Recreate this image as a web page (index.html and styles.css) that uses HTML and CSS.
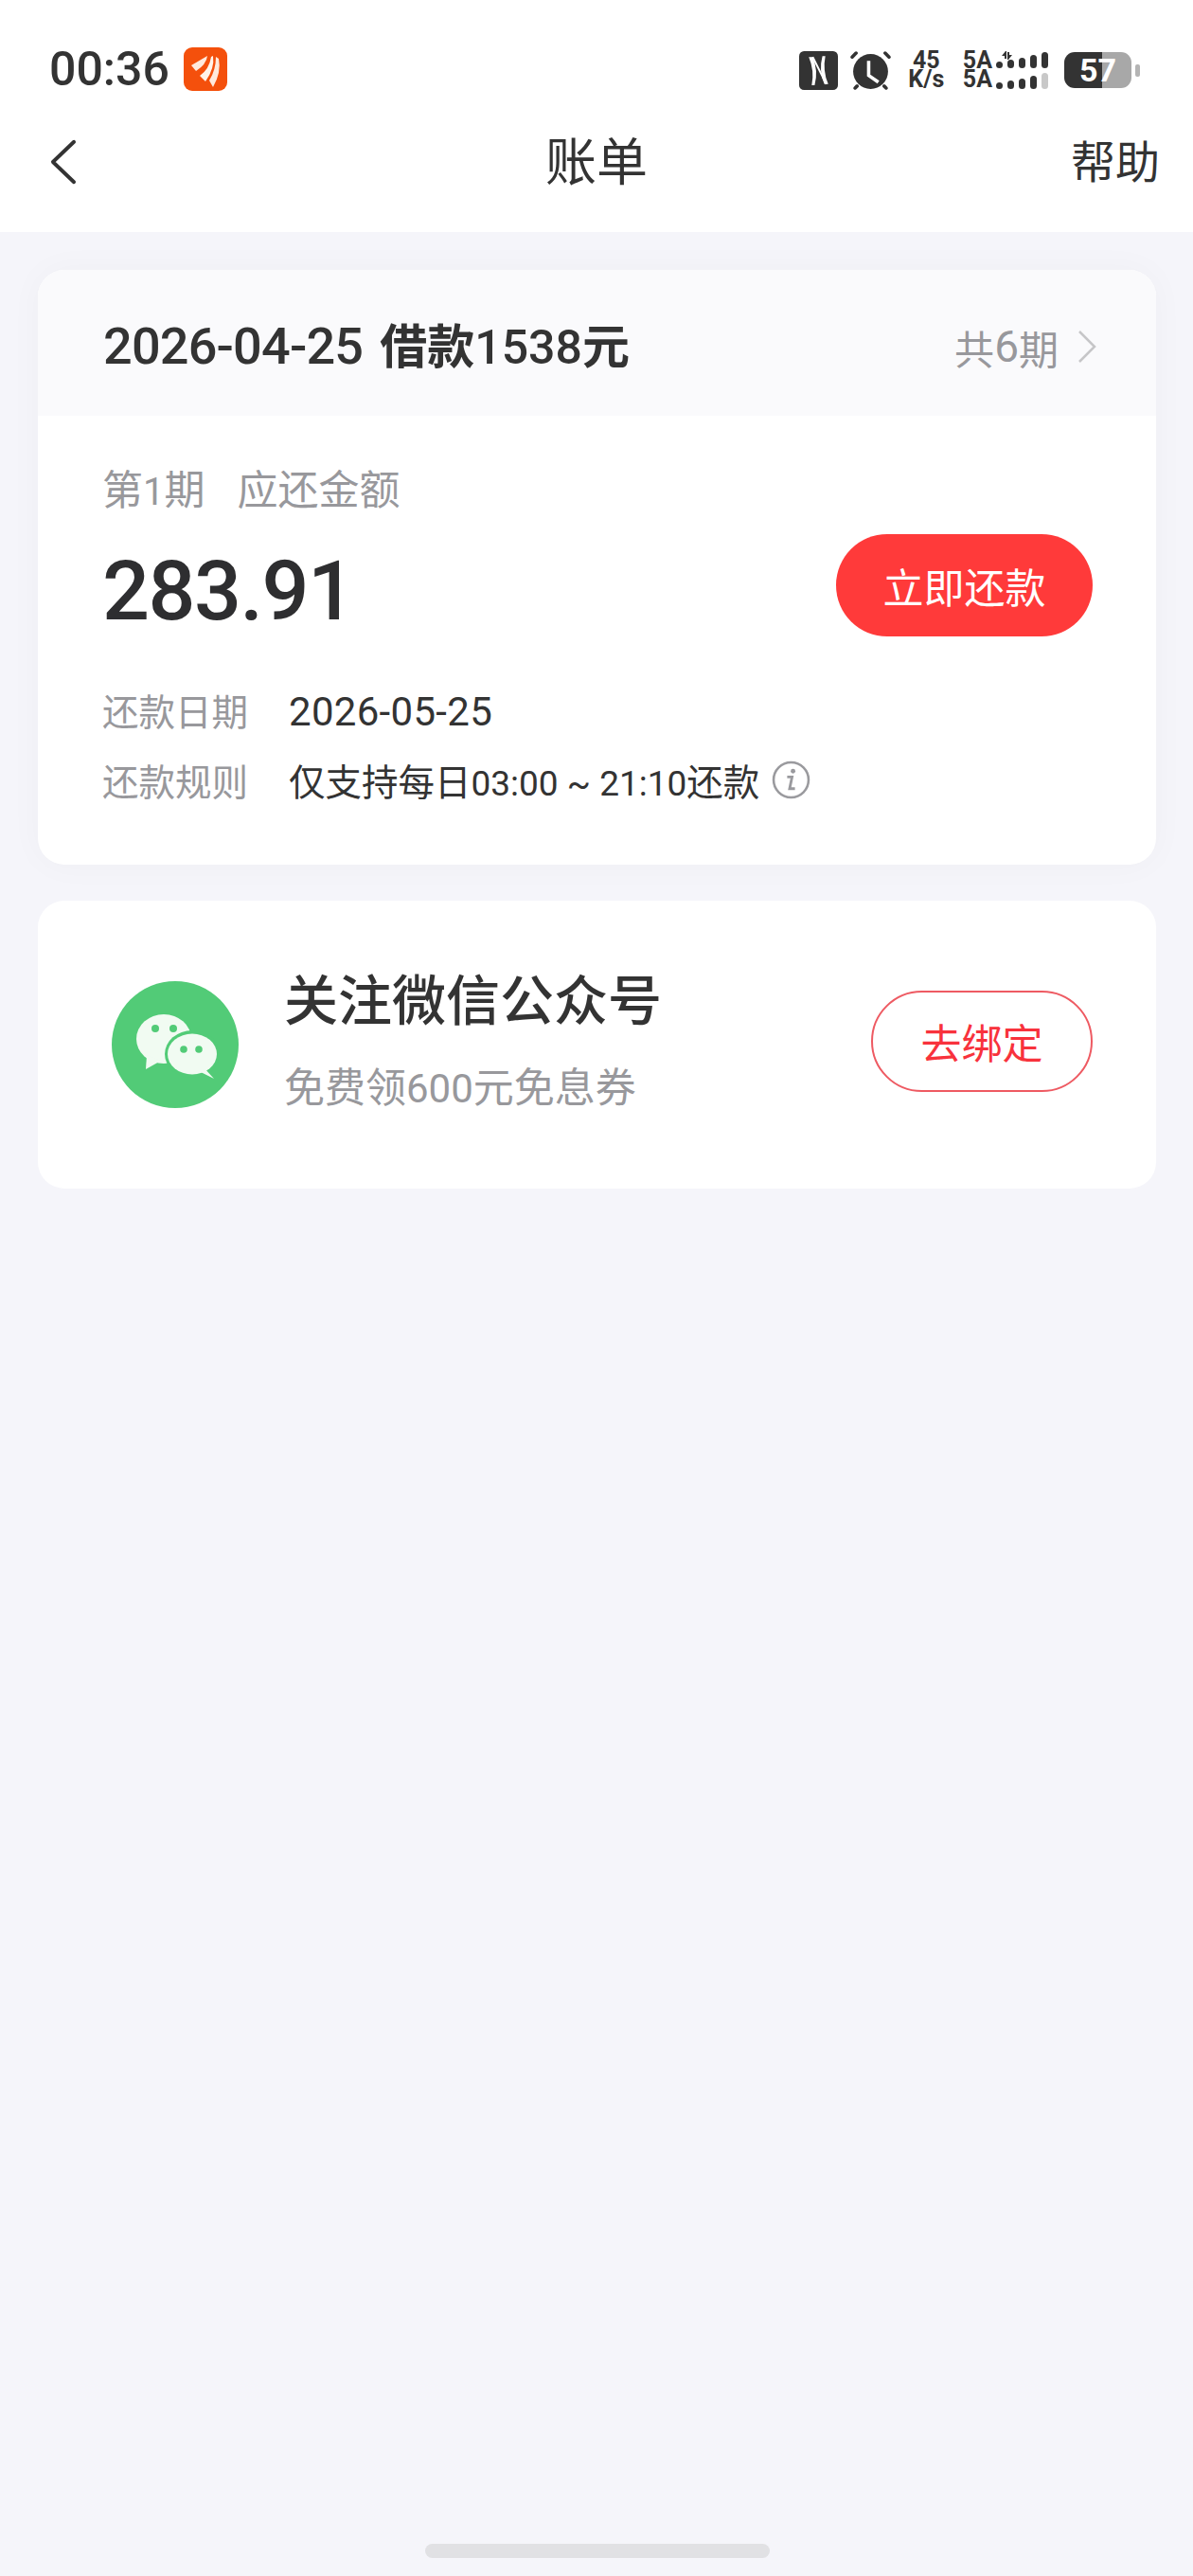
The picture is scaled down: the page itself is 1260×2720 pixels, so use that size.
FILE: index.html
```html
<!DOCTYPE html>
<html>
    <head>
        <meta charset="utf-8">
        <link rel="stylesheet" href="styles.css">
        <title>账单</title>
    </head>
    <body>
        <div class="topArea">
            <div class="statusBar">
                <span class="time">00:36</span>
                <svg class="appIcon" viewBox="0 0 46 46">
                    <rect width="46" height="46" rx="9" fill="#f4500c"/>
                    <path d="M8 19 L25 9 Q24 18 13 25 Z" fill="#ffe9dc"/>
                    <path d="M17 30 Q27 23 29 10 L31 9 Q33 22 23 36 Z" fill="#fff3ea"/>
                    <path d="M27 35 Q34 24 34 10 L37 12 Q40 26 31 42 Z" fill="#ffe9dc"/>
                </svg>
                <span class="statusRight">
                    <svg class="nfcIcon" viewBox="0 0 40 40">
                        <rect width="40" height="40" rx="5" fill="#333"/>
                        <path d="M10 6 H14 Q20 20 16 35 H13 Q16 20 10 6 Z" fill="#fff"/>
                        <path d="M30 34 H26 Q20 20 24 5 H27 Q24 20 30 34 Z" fill="#fff"/>
                        <path d="M14 6 L28 34" stroke="#fff" stroke-width="2" fill="none"/>
                    </svg>
                    <svg class="alarmIcon" viewBox="0 0 42 40">
                        <circle cx="21" cy="21" r="18" fill="#333"/>
                        <path d="M2 6 L6 2 M40 6 L36 2 M7 36 L5 38 M35 36 L37 38" stroke="#333" stroke-width="3.5" stroke-linecap="round"/>
                        <path d="M19 10 V25 L29 32" stroke="#fff" stroke-width="3.5" fill="none"/>
                    </svg>
                    <span class="netSpeed"><span>45</span><span>K/s</span></span>
                    <span class="signalLabels"><span>5A</span><span>5A</span></span>
                    <svg class="signalIcon" viewBox="0 0 56 40">
                        <path d="M11 0 L7 5 H10 V8 H12 V0 Z M14 9 L18 4 H15 V1 H13 V9 Z" fill="#333"/>
                        <rect x="1" y="11" width="7" height="7" rx="3.5" fill="#333"/>
                        <rect x="13" y="9" width="7" height="9" rx="3.5" fill="#333"/>
                        <rect x="25" y="7" width="7" height="11" rx="3.5" fill="#333"/>
                        <rect x="37" y="4" width="7" height="14" rx="3.5" fill="#333"/>
                        <rect x="49" y="1" width="7" height="17" rx="3.5" fill="#333"/>
                        <rect x="1" y="33" width="7" height="7" rx="3.5" fill="#333"/>
                        <rect x="13" y="31" width="7" height="9" rx="3.5" fill="#333"/>
                        <rect x="25" y="29" width="7" height="11" rx="3.5" fill="#333"/>
                        <rect x="37" y="26" width="7" height="14" rx="3.5" fill="#333"/>
                        <rect x="49" y="23" width="7" height="17" rx="3.5" fill="#c8c8c8"/>
                    </svg>
                    <span class="battery"><span class="batteryBody">57</span><span class="batteryTip"></span></span>
                </span>
            </div>
            <div class="navBar">
                <svg class="backIcon" viewBox="0 0 30 50">
                    <path d="M27 3 L4 25 L27 47" stroke="#333" stroke-width="4" fill="none" stroke-linecap="round" stroke-linejoin="round"/>
                </svg>
                <span class="navTitle">账单</span>
                <span class="navHelp">帮助</span>
            </div>
        </div>

        <div class="page">
            <div class="card billCard">
                <div class="billHead">
                    <span class="billTitle"><span class="num billDate">2026-04-25</span>借款<span class="num billSum">1538</span>元</span>
                    <span class="billCount">共<span class="num">6</span>期
                        <svg class="moreIcon" viewBox="0 0 20 36">
                            <path d="M2 2 L18 18 L2 34" stroke="#c6c6c8" stroke-width="2.5" fill="none"/>
                        </svg>
                    </span>
                </div>
                <div class="billBody">
                    <div class="dueLabel"><span>第<span class="num">1</span>期</span><span>应还金额</span></div>
                    <div class="dueRow">
                        <span class="dueAmount">283.91</span>
                        <span class="payBtn">立即还款</span>
                    </div>
                    <div class="infoRow">
                        <span class="infoKey">还款日期</span>
                        <span class="infoVal"><span class="num">2026-05-25</span></span>
                    </div>
                    <div class="infoRow">
                        <span class="infoKey">还款规则</span>
                        <span class="infoVal">仅支持每日<span class="num ruleTime">03:00 ~ 21:10</span>还款</span>
                        <svg class="infoIcon" viewBox="0 0 40 40">
                            <circle cx="20" cy="20" r="18" stroke="#9a9a9e" stroke-width="2.5" fill="none"/>
                            <circle cx="22" cy="11" r="2.4" fill="#9a9a9e"/>
                            <path d="M16 17 H21 L18.5 29 H24" stroke="#9a9a9e" stroke-width="2.8" fill="none"/>
                        </svg>
                    </div>
                </div>
            </div>

            <div class="card wechatCard">
                <svg class="wechatIcon" viewBox="0 0 134 134">
                    <circle cx="67" cy="67" r="67" fill="#52cb77"/>
                    <ellipse cx="55" cy="61" rx="29" ry="26" fill="#f1fbf2"/>
                    <path d="M37 78 L36 93 L52 84 Z" fill="#f1fbf2"/>
                    <ellipse cx="85" cy="77" rx="29" ry="25" fill="#52cb77"/>
                    <ellipse cx="85" cy="77" rx="26" ry="21.5" fill="#f1fbf2"/>
                    <path d="M97 91 L108 103 L94 96 Z" fill="#f1fbf2"/>
                    <circle cx="46" cy="50" r="4" fill="#52cb77"/>
                    <circle cx="65" cy="50" r="4" fill="#52cb77"/>
                    <circle cx="76" cy="72" r="3.8" fill="#52cb77"/>
                    <circle cx="92" cy="72" r="3.8" fill="#52cb77"/>
                </svg>
                <div class="wechatText">
                    <div class="wechatTitle">关注微信公众号</div>
                    <div class="wechatSub">免费领<span class="num">600</span>元免息券</div>
                </div>
                <span class="bindBtn">去绑定</span>
            </div>

            <div class="homeBar"></div>
        </div>
    </body>
</html>
```

FILE: styles.css
```css
html, body {margin: 0;padding: 0;}
body {
    width: 1260px;
    height: 2720px;
    background: #f5f5fa;
    color: #333;
    font-family: "Noto Sans CJK SC", "Noto Sans", sans-serif;
    display: flex;
    flex-direction: column;
    overflow: hidden;
}
.num {font-family: Roboto, "Noto Sans CJK SC", sans-serif;}

/* top */
.topArea {background: #fff;height: 245px;flex: none;}
.statusBar {
    height: 90px;
    padding: 56px 52px 0 52px;
    box-sizing: border-box;
    display: flex;
    align-items: center;
}
.time {font-family: Roboto, sans-serif;font-weight: 500;font-size: 50px;line-height: 46px;color: #333;}
.appIcon {width: 46px;height: 46px;margin-left: 15px;}
.statusRight {margin-left: auto;display: flex;align-items: center;margin-right: 4px;margin-top: 2px;}
.nfcIcon {width: 41px;height: 41px;}
.alarmIcon {width: 43px;height: 41px;margin-left: 13px;}
.netSpeed, .signalLabels {
    display: flex;
    flex-direction: column;
    align-items: center;
    font-family: Roboto, sans-serif;
    font-weight: 700;
    font-size: 25px;
    line-height: 20px;
    color: #333;
}
.netSpeed {margin-left: 17px;width: 41px;}
.signalLabels {margin-left: 18px;}
.signalIcon {width: 56px;height: 40px;margin-left: 3px;}
.battery {display: flex;align-items: center;margin-left: 17px;}
.batteryBody {
    width: 71px;
    height: 38px;
    border-radius: 11px;
    background: linear-gradient(90deg, #333 0, #333 40px, #a8a8a8 40px, #a8a8a8 100%);
    color: #fff;
    font-family: Roboto, sans-serif;
    font-weight: 700;
    font-size: 34px;
    line-height: 38px;
    text-align: center;
}
.batteryTip {width: 5px;height: 13px;border-radius: 2px;background: #b4b4b4;margin-left: 4px;}

.navBar {
    height: 155px;
    padding: 0 35px 0 52px;
    display: flex;
    align-items: center;
    justify-content: space-between;
    position: relative;
}
.backIcon {width: 29px;height: 50px;margin-top: 6px;}
.navTitle {font-size: 54px;line-height: 60px;position: absolute;left: 0;right: 0;text-align: center;}
.navHelp {font-size: 47px;line-height: 60px;}

/* cards */
.page {flex: 1;padding: 40px 39px 0 40px;display: flex;flex-direction: column;}
.card {background: #fff;border-radius: 28px;overflow: hidden;}
.billCard {box-shadow: 0 0 36px rgba(0, 0, 0, 0.03);}
.billHead {
    height: 154px;
    background: #fafafc;
    padding: 0 63px 0 69px;
    display: flex;
    align-items: center;
    justify-content: space-between;
}
.billTitle {font-size: 50px;font-weight: 700;white-space: pre;}
.billDate {font-size: 54px;font-weight: 500;letter-spacing: -0.8px;margin-right: 18px;}
.billSum {font-size: 50px;font-weight: 500;}
.billCount {font-size: 42px;color: #98989c;display: flex;align-items: center;margin-top: 8px;}
.billCount .num {font-size: 46px;}
.moreIcon {width: 20px;height: 36px;margin-left: 20px;margin-top: -1px;}

.billBody {padding: 47px 67px 0 68px;height: 474px;box-sizing: border-box;}
.dueLabel {font-size: 43px;line-height: 56px;color: #98989c;display: flex;gap: 34px;}
.dueLabel .num {font-size: 40px;}
.dueRow {display: flex;align-items: flex-start;justify-content: space-between;margin-top: 16px;}
.dueAmount {font-family: Roboto, sans-serif;font-weight: 500;font-size: 88px;line-height: 108px;color: #2e2e30;letter-spacing: -1.5px;margin-top: 6px;}
.payBtn {
    width: 271px;
    height: 108px;
    border-radius: 54px;
    background: #ff3a3a;
    color: #fff;
    font-size: 43px;
    line-height: 108px;
    text-align: center;
}
.infoRow {display: flex;align-items: center;height: 74px;}
.dueRow + .infoRow {margin-top: 34px;}
.infoKey {font-size: 38.5px;color: #98989c;width: 197px;flex: none;}
.infoVal {font-size: 38.5px;color: #333;white-space: pre;}
.infoVal .num {font-size: 42px;letter-spacing: 0.3px;}
.infoVal .ruleTime {font-size: 37px;letter-spacing: 0;}
.infoIcon {width: 41px;height: 41px;margin-left: 13px;}

.wechatCard {
    margin-top: 38px;
    height: 304px;
    padding: 0 67px 0 78px;
    display: flex;
    align-items: center;
}
.wechatIcon {width: 134px;height: 134px;flex: none;}
.wechatText {margin-left: 48px;margin-bottom: 15px;}
.wechatTitle {font-size: 57px;font-weight: 500;line-height: 76px;}
.wechatSub {font-size: 43px;line-height: 56px;color: #98989c;margin-top: 27px;}
.wechatSub .num {font-size: 42px;}
.bindBtn {
    margin-left: auto;
    margin-bottom: 8px;
    width: 234px;
    height: 107px;
    box-sizing: border-box;
    border: 2px solid #ee5a62;
    border-radius: 54px;
    color: #f8323c;
    font-size: 43px;
    line-height: 103px;
    text-align: center;
}

.homeBar {
    margin-top: auto;
    margin-bottom: 19px;
    align-self: center;
    width: 364px;
    height: 15px;
    border-radius: 8px;
    background: #e1e1e4;
}
```
